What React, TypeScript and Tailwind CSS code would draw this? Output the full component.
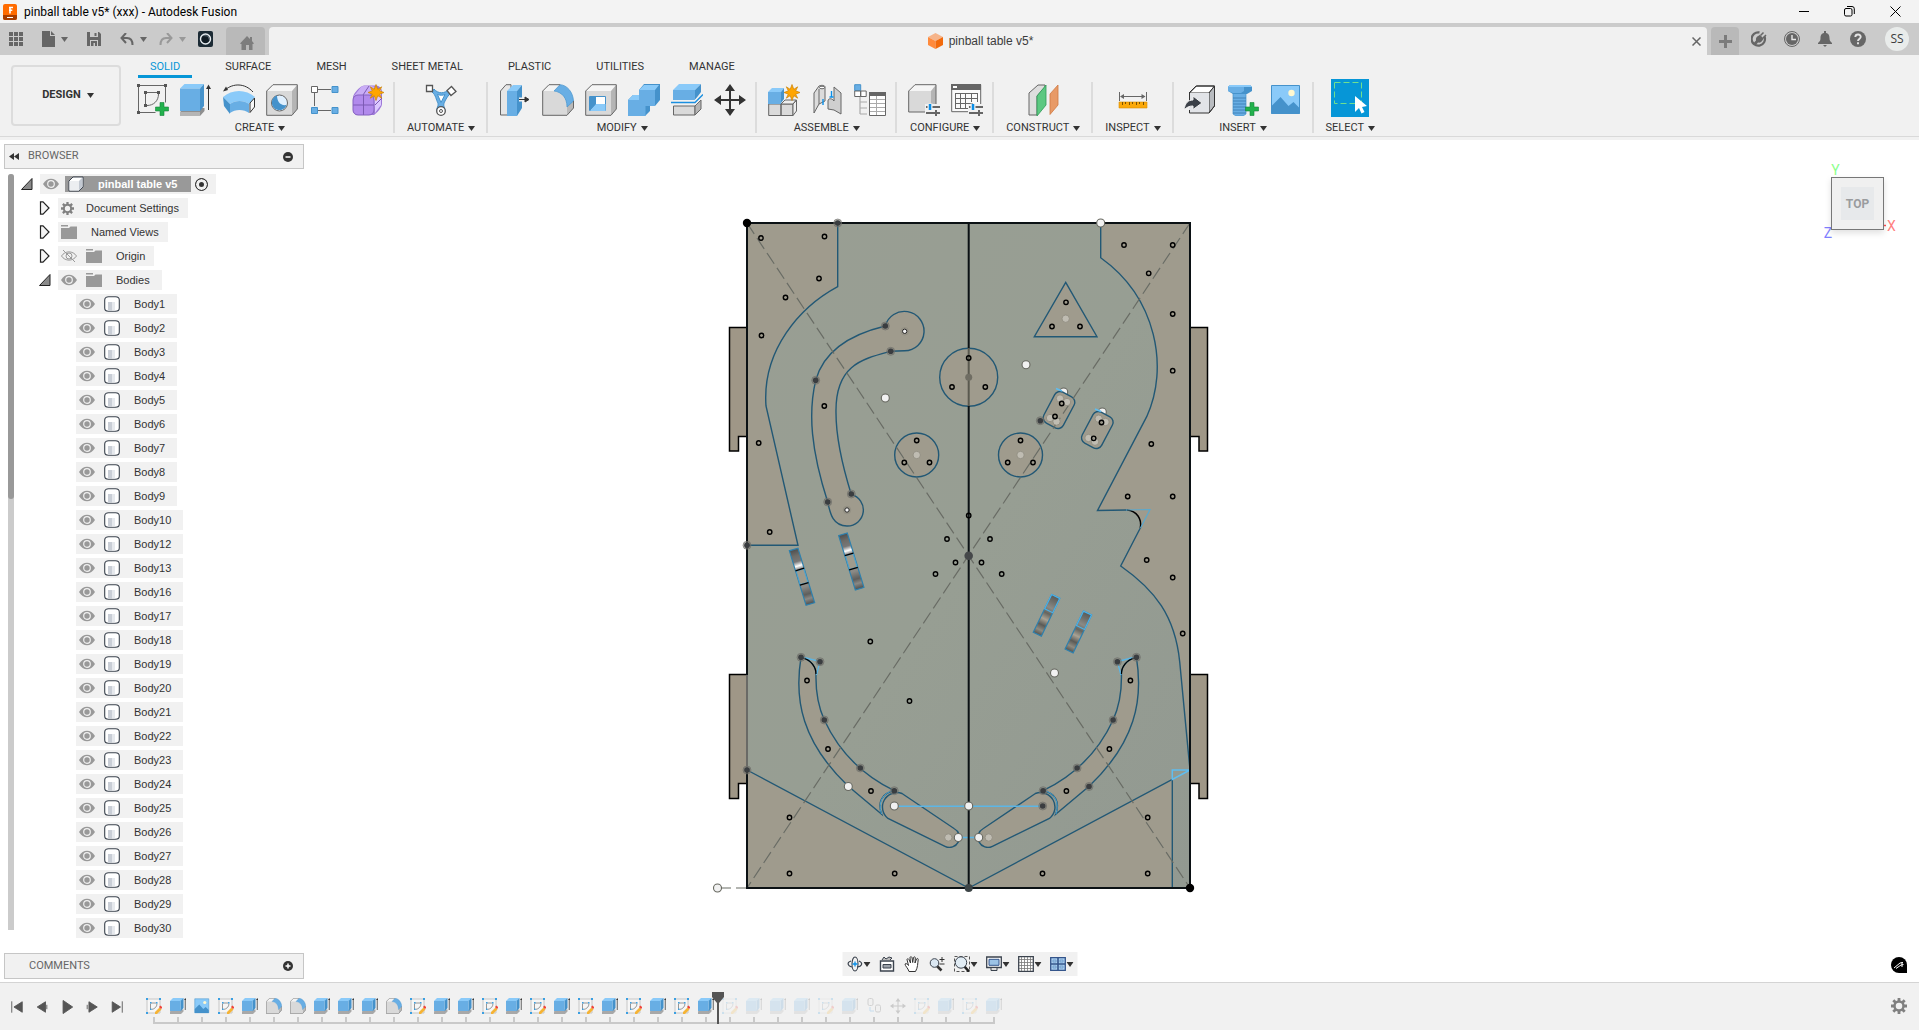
import type { ReactNode } from "react";

type Point = [number, number];

const LIGHT = "#8acaf9";
const MID = "#68aee4";
const DEEP = "#4592cb";
const INK = "#666666";

/* ---------- small shared glyphs ---------- */

function Caret({ className = "fill-[#333]" }: { className?: string }) {
  return (
    <svg width="7" height="5" viewBox="0 0 7 5" className={className} aria-hidden="true">
      <path d="M0 0h7L3.5 5z" />
    </svg>
  );
}

function Icon({ size = 32, children }: { size?: number; children: ReactNode }) {
  return (
    <svg
      width={size}
      height={size}
      viewBox="0 0 32 32"
      fill="none"
      className="shrink-0"
      aria-hidden="true"
    >
      {children}
    </svg>
  );
}

function GreenPlus() {
  return <path d="M23 18.5h4V23h4.5v4H27v4.500h-4V27h-4.500v-4H23z" fill="#22b14c" stroke="#15843a" strokeWidth="0.6" />;
}

function Spark({ x, y }: { x: number; y: number }) {
  return (
    <path
      transform={`translate(${x} ${y})`}
      d="M0-8L1.8-3.2L5.7-5.7L3.7-1.7L8 0L3.7 1.7L5.7 5.7L1.8 3.2L0 8L-1.8 3.2L-5.7 5.7L-3.7 1.7L-8 0L-3.7-1.7L-5.7-5.7L-1.8-3.2Z"
      fill="#ffa500"
      stroke="#c98208"
      strokeWidth="0.7"
    />
  );
}

function Sliders() {
  return (
    <g>
      <path d="M17 20h15v12H17z" fill="#f1f1f1" />
      <path d="M18 23h14M18 29h14" stroke={INK} strokeWidth="2" />
      <path d="M22 19.5v7" stroke="#f1f1f1" strokeWidth="5" />
      <path d="M22 20v6" stroke="#0a8fe8" strokeWidth="2.5" />
      <path d="M28 26v6" stroke={INK} strokeWidth="2" />
    </g>
  );
}

function GreyBox() {
  return (
    <g stroke={INK} strokeWidth="1" strokeLinejoin="round">
      <path d="M.7 7L7 .7h24.3L26 7z" fill="#f5f5f5" stroke="none" />
      <path d="M26 7l5.3-6.3V25L26 31.3z" fill="#b5b5b5" stroke="none" />
      <path d="M.7 7H26v24.3H.7z" fill="#d9d9d9" stroke="none" />
      <path d="M.7 7L7 .7h24.3V25L26 31.3H.7z" />
    </g>
  );
}

/* ---------- ribbon icons ---------- */

const icons: Record<string, ReactNode> = {
  sketch: (
    <>
      <path d="M1.5 1.5h27v17M1.5 1.5v27h17" stroke={INK} strokeWidth="1" />
      <path d="M0 0h3v3H0zM27 0h3v3h-3zM0 27h3v3H0zM7 7h3v3H7zM20 7h3v3h-3zM7 20h3v3H7z" fill="#555" />
      <path d="M10 8.5h10M8.5 10v10M21.5 10c0 7-5 11.5-11.5 11.5" stroke={INK} strokeWidth="1" />
      <GreenPlus />
    </>
  ),
  extrude: (
    <>
      <path d="M0 28l5-4h19.5v3L20 32H0z" fill="#8f8f8f" />
      <path d="M0 28h20v4H0z" fill="#b5b5b5" />
      <path d="M0 4.5L4.5 0H24l-4 4.5z" fill={LIGHT} />
      <path d="M20 4.5L24 0v22l-4 5z" fill={DEEP} />
      <path d="M0 4.5h20V27H0z" fill={MID} />
      <path d="M28.5 3v23" stroke="#333" strokeWidth="1" />
      <path d="M28.5.5L31 5h-5z" fill="#333" />
    </>
  ),
  revolve: (
    <>
      <path d="M2 6C10-1 22-1 30 8" stroke="#333" strokeWidth="1" />
      <path d="M0 7.5L5 6 3 2.5z" fill="#333" />
      <path d="M0 13C9 5 23 5 32 13l-6 7c-5-4-14-4-19 0z" fill={LIGHT} />
      <path d="M0 13l7 7v10l-6-8z" fill={DEEP} />
      <path d="M7 20c5-4 14-4 19 0v9c-5-4-14-4-19 0z" fill={MID} />
      <path d="M27 19l4.500-5v9L27 28.500z" fill="#f8f8f8" stroke="#333" strokeWidth="1" />
    </>
  ),
  hole: (
    <>
      <GreyBox />
      <circle cx="13.5" cy="19" r="8" fill="#dff0ff" stroke={INK} />
      <path d="M11 11.500a7.500 7.500 0 1 0 9.500 9.500C14 22 11 17 11 11.500z" fill={DEEP} />
    </>
  ),
  pattern: (
    <>
      <path d="M9 5.5h13M5.500 9v13M9 26.500h13" stroke={INK} strokeWidth="1" />
      <path d="M2.5 2.5h6v6h-6z" fill="#fff" stroke={INK} />
      <path d="M23 2.5h6v6h-6zM2.5 23.5h6v6h-6zM23 23.5h6v6h-6z" fill={MID} stroke={DEEP} />
    </>
  ),
  form: (
    <>
      <path d="M1 13c0-3 7-11 11-11.5h12C28 2 30 5 30 8v12c0 3-5 9-8 11H6c-3 0-5-2-5-5z" fill="#9d78d8" />
      <path d="M2 12l7-9c3-2 12-1 14 0l-5 8z" fill="#c9adf6" />
      <path d="M22 13l7-8v16l-6 8z" fill="#dcc8ff" />
      <rect x="1" y="11" width="21" height="20" rx="5" fill="#b18aec" />
      <path d="M11.5 11v20M1 21h21M23 21l7-7M11 11l6-9" stroke="#7d5bb5" strokeWidth="1" />
      <rect x="1" y="11" width="21" height="20" rx="5" stroke="#8562c0" />
      <Spark x={24} y={8.5} />
    </>
  ),
  automate: (
    <>
      <path d="M7 8c4 3 4 8 6 11 1 3-2 5-1 8 2 4 7 4 8 0 0-3-2-5-1-8 2-4 4-8 8-11l-3-3c-4 5-11 5-15 0z" fill={MID} stroke={DEEP} strokeWidth="1" strokeLinejoin="round" />
      <path d="M12.500 10.500l3.500 8 4-8c-2 1-5 1-7.500 0z" fill="#fff" stroke={DEEP} />
      <path d="M1.5 1.5h6v6h-6z" fill="#fff" stroke="#555" strokeWidth="1.3" />
      <path d="M26.5 2.5l4.500 5-5 4-4-5z" fill="#fff" stroke="#555" strokeWidth="1.3" />
      <circle cx="16" cy="27" r="4.3" fill="#fff" stroke="#555" strokeWidth="1.3" />
      <circle cx="16" cy="27" r="1.5" stroke="#555" />
    </>
  ),
  press: (
    <>
      <path d="M1.5 7L7 .7h5V31H1.500z" fill="#e6e6e6" stroke={INK} />
      <path d="M8 7l6-6h9l-5 6z" fill={LIGHT} />
      <path d="M8 7h10v25H8z" fill={MID} />
      <path d="M18 7l5-6v23l-5 8z" fill={DEEP} />
      <path d="M20 15.5h7" stroke="#f1f1f1" strokeWidth="4" />
      <path d="M20 15.5h7M26 13l4 2.500-4 2.500z" stroke="#333" fill="#333" />
    </>
  ),
  fillet: (
    <>
      <path d="M.7 7L7 .7h11L12 7z" fill="#f3f3f3" />
      <path d="M25 23l6.500-7v8L25 31.3z" fill="#b9b9b9" />
      <path d="M.7 7H12c8 1 13 8 13 16v8.3H.7z" fill="#d9d9d9" />
      <path d="M12 7l6-6.3C25 1 31 8 31.5 17L25 23C25 14 20 8 12 7z" fill={MID} stroke={DEEP} strokeWidth=".7" />
      <path d="M18 .7H7L.7 7v24.3H25l6.5-7.3v-7" stroke={INK} />
    </>
  ),
  shell: (
    <>
      <GreyBox />
      <path d="M4.5 12.5h16v14h-16z" fill="#fff" stroke={DEEP} />
      <path d="M5 13h6v8l-6 6z" fill={DEEP} />
      <path d="M5 27l6-7h9.500v7z" fill={LIGHT} />
    </>
  ),
  combine: (
    <>
      <path d="M0 16l5-5h6V6l5-6h16v16l-5 6h-5v5l-5 5H0z" fill={DEEP} />
      <path d="M0 16h11V6h16v16h-9.500v10H0z" fill={MID} />
      <path d="M0 16l5-5h6v5zM11 6l5-5h15l-4 5z" fill={LIGHT} />
    </>
  ),
  split: (
    <>
      <path d="M2.5 22H24v9H2.500z" fill="#dadada" stroke={INK} />
      <path d="M24 22l6-6v9l-6 6z" fill="#b5b5b5" stroke={INK} />
      <path d="M2 6l6-6h22l-6 6z" fill={LIGHT} />
      <path d="M24 6l6-6v8l-6 8z" fill={DEEP} />
      <path d="M2 6h22v10H2z" fill={MID} />
      <path d="M0 18.5h24l8-8" stroke="#f1f1f1" strokeWidth="4" />
      <path d="M0 18.5h24l8-8" stroke="#1a8fe0" strokeWidth="1.4" />
    </>
  ),
  move: (
    <path
      d="M16 0l5 7h-4v8h8v-4l7 5-7 5v-4h-8v8h4l-5 7-5-7h4v-8H7v4l-7-5 7-5v4h8V7h-4z"
      fill="#333"
    />
  ),
  component: (
    <>
      <path d="M.7 20H13v11.500H.7zM13 20h12v11.500H13z" fill="#dadada" stroke={INK} />
      <path d="M13 20l4-4h11.500L25 20zM25 20l3.500-4v11L25 31.500z" fill="#eee" stroke={INK} />
      <path d="M0 8l4-4h12l-3 4z" fill={LIGHT} />
      <path d="M13 8l3-4v11l-3 4z" fill={DEEP} />
      <path d="M0 8h13v12H0z" fill={MID} />
      <Spark x={24} y={8.5} />
    </>
  ),
  joint: (
    <>
      <path d="M3 9l5-7c2-1 6-1 6 1v14l-6 3-5 9z" fill="#dcdcdc" stroke={INK} />
      <path d="M8 5v15" stroke={INK} />
      <path d="M30 9l-7-6v14c-2-3-6-3-6 0v8l6 1 7 4z" fill="#cfcfcf" stroke={INK} />
      <ellipse cx="11" cy="3.5" rx="2.5" ry="1.3" fill="#fff" stroke={INK} />
      <path d="M12 15v6M20.5 7v6M18.5 13h4" stroke="#0a8fe8" strokeWidth="1.4" />
    </>
  ),
  tree: (
    <>
      <path d="M.7.7h6v6h-6z" fill={MID} stroke={DEEP} />
      <path d="M.7 7h6v5.500h-6zM6.7 7h5.500v5.500H6.700z" fill="#fff" stroke={INK} />
      <path d="M6 13v17M6 18h7M6 24h7M6 30h7" stroke="#aaa" strokeWidth="1.2" />
      <path d="M15.5 8.5h16v23h-16z" fill="#fff" stroke={INK} />
      <path d="M15 8h17v4H15z" fill={INK} />
      <path d="M16 15.500h15M16 19.500h15M16 23.500h15M16 27.500h15M22.500 12v19" stroke="#aaa" />
    </>
  ),
  configBox: (
    <>
      <path d="M.7 7L7 .7h21L23 7z" fill="#f5f5f5" />
      <path d="M23 7l5-6.3V22L23 27z" fill="#b5b5b5" />
      <path d="M.7 7H23v21H.7z" fill="#d9d9d9" />
      <path d="M18 28H.7V7L7 .7h21V20" stroke={INK} />
      <Sliders />
    </>
  ),
  configTable: (
    <>
      <path d="M.7.7h29v27h-29z" fill="#fafafa" stroke={INK} />
      <path d="M0 0h30v6H0z" fill={INK} />
      <path d="M2 2h4v2H2z" fill="#fff" />
      <path d="M4 9.5h23M4 14.5h23M4 19.5h18M4 24.5h14M4.5 9v16M9.5 9v16M14.5 9v16M26.5 9v9M20.5 9v9" stroke={INK} />
      <Sliders />
    </>
  ),
  plane: (
    <>
      <path d="M2 9l9-8h7v2l-8 9v19H2z" fill="#dedede" stroke={INK} />
      <path d="M10 12l9-11v20l-9 11z" fill="#5cc881" stroke="#2f9a57" strokeWidth=".8" />
      <path d="M23 10l8-9v20l-8 9.500z" fill="#e89a66" stroke="#cf7a42" strokeWidth=".8" />
    </>
  ),
  measure: (
    <>
      <path d="M2.500 8v9M29.500 8v9M4 12.5h24" stroke={INK} strokeWidth="1" />
      <path d="M3 12.5l4-2.500v5zM28.500 12.500l-4-2.500v5z" fill={INK} />
      <path d="M2 18h28v6H2z" fill="#fba90a" stroke="#d98e00" strokeWidth=".6" />
      <path d="M5.500 18v3M8.500 18v2M12.500 18v3M15.500 18v2M19.500 18v3M22.500 18v2M26.500 18v3" stroke="#7a5200" />
    </>
  ),
  insertBox: (
    <>
      <path d="M5 9l7-7h18.500L25 9z" fill="#fff" stroke="#333" />
      <path d="M25 9l5.500-7v20L25 29z" fill="#b9bcc0" stroke="#333" />
      <path d="M5 9h20v20H5z" fill="#e2e4e8" />
      <path d="M5.500 17V9l7-7h18v20L25 29H5.500v-3" stroke="#333" strokeLinejoin="round" />
      <path d="M0 26c1-7 4-10 9-10v-4l9 7-9 6.500V22c-4 0-6 1-9 4z" fill="#3b4048" stroke="#f1f1f1" />
    </>
  ),
  bolt: (
    <>
      <path d="M6 9h13v21l-3 2H9l-3-2z" fill={MID} stroke={DEEP} strokeWidth=".7" />
      <path d="M6 14h13M6 17h13M6 20h13M6 23h13M6 26h13M6 29h13" stroke="#3c7fb6" strokeWidth=".9" />
      <path d="M1 3l2-2h20l2 2v4l-5 3H6L1 7z" fill={DEEP} />
      <path d="M1 2h16v5l-3 2H6L1 7z" fill={MID} />
      <path d="M1 3l2-2h20l2 2z" fill={LIGHT} />
      <GreenPlus />
    </>
  ),
  picture: (
    <>
      <path d="M1.5 1.5h28v28h-28z" fill={LIGHT} />
      <path d="M1.5 22l9-9 8 9 5-4 6 6v6h-28z" fill={DEEP} />
      <circle cx="21.5" cy="9" r="3.2" fill="#fff8d0" />
      <path d="M1.5 1.5h28v28h-28z" stroke={DEEP} />
    </>
  ),
};

function CaretLabel({ text }: { text: string }) {
  return (
    <button type="button" className="flex items-center gap-1 whitespace-nowrap px-[7px] leading-4">
      {text}
      <Caret />
    </button>
  );
}

const groups = [
  { label: "CREATE", icons: ["sketch", "extrude", "revolve", "hole", "pattern", "form"] },
  { label: "AUTOMATE", icons: ["automate"] },
  { label: "MODIFY", icons: ["press", "fillet", "shell", "combine", "split", "move"] },
  { label: "ASSEMBLE", icons: ["component", "joint", "tree"] },
  { label: "CONFIGURE", icons: ["configBox", "configTable"] },
  { label: "CONSTRUCT", icons: ["plane"] },
  { label: "INSPECT", icons: ["measure"] },
  { label: "INSERT", icons: ["insertBox", "bolt", "picture"] },
];

const ribbonTabs = ["SOLID", "SURFACE", "MESH", "SHEET METAL", "PLASTIC", "UTILITIES", "MANAGE"];

/* ---------- header ---------- */

function TitleBar() {
  return (
    <div className="flex h-[23px] items-center bg-[#f3f3f3] pl-[3px] font-[Roboto,sans-serif] text-xs text-black">
      <svg width="14" height="16" viewBox="0 0 14 16" aria-hidden="true">
        <rect width="14" height="16" rx="2" fill="#ff6b00" />
        <path d="M0 11h14v3a2 2 0 0 1-2 2H2a2 2 0 0 1-2-2z" fill="#a63c00" />
        <path d="M7 3v6.500M6 3.500h4M6 6.300h3.300" stroke="#fff" strokeWidth="1.6" />
        <path d="M4 13.5h6" stroke="#fff" strokeWidth="1" />
      </svg>
      <h1 className="pl-[7px]">pinball table v5* (xxx) - Autodesk Fusion</h1>
      <div className="ml-auto flex h-full items-center pr-px">
        <button type="button" aria-label="Minimize" className="grid w-[46px] place-items-center">
          <svg width="11" height="11" viewBox="0 0 11 11"><path d="M0 5.5h10" stroke="#000" /></svg>
        </button>
        <button type="button" aria-label="Restore" className="grid w-[45px] place-items-center">
          <svg width="11" height="11" viewBox="0 0 11 11" fill="none" stroke="#000">
            <rect x=".5" y="2.5" width="7.5" height="7.5" rx="1.5" />
            <path d="M3 .5h5a2.300 2.300 0 0 1 2.300 2.300V8" />
          </svg>
        </button>
        <button type="button" aria-label="Close" className="grid w-[46px] place-items-center">
          <svg width="11" height="11" viewBox="0 0 11 11"><path d="M.5.5l10 10M10.500.5l-10 10" stroke="#000" /></svg>
        </button>
      </div>
    </div>
  );
}

function TabStrip() {
  return (
    <div className="flex h-8 items-stretch bg-[#cbcbcb] pt-1 font-['Liberation_Sans',Arial,sans-serif] text-xs text-[#3c3c3c]">
      <div className="flex items-center gap-[19px] pb-1 pl-[9px] pr-[13px]">
        <button type="button" aria-label="Data panel">
          <svg width="14" height="14" viewBox="0 0 14 14" fill="#666">
            <path d="M0 0h4v4H0zM5 0h4v4H5zM10 0h4v4h-4zM0 5h4v4H0zM5 5h4v4H5zM10 5h4v4h-4zM0 10h4v4H0zM5 10h4v4H5zM10 10h4v4h-4z" />
          </svg>
        </button>
        <button type="button" aria-label="File" className="flex items-center gap-1.5">
          <svg width="13" height="16" viewBox="0 0 13 16" fill="#666"><path d="M0 0h8v5h5v11H0zM9 0l4 4H9z" /></svg>
          <Caret className="fill-[#666]" />
        </button>
        <button type="button" aria-label="Save">
          <svg width="14" height="14" viewBox="0 0 14 14">
            <path d="M0 0h12l2 2v12H0z" fill="#666" />
            <path d="M3 0h8v5H3zM3 8h8v6H3z" fill="#cbcbcb" />
            <path d="M7.500 1h2v3h-2zM4 9h6v5H4z" fill="#666" />
            <path d="M6.500 11H8v3H6.500z" fill="#cbcbcb" />
          </svg>
        </button>
        <div className="flex items-center gap-3">
          <button type="button" aria-label="Undo" className="flex items-center gap-1.5">
            <svg width="14" height="13" viewBox="0 0 14 13" fill="none" stroke="#666" strokeWidth="2">
              <path d="M6 0L1.500 5L6 10M2 5h5c4 0 5.500 2.500 5.500 7" />
            </svg>
            <Caret className="fill-[#666]" />
          </button>
          <button type="button" aria-label="Redo" className="flex items-center gap-1.5">
            <svg width="14" height="13" viewBox="0 0 14 13" fill="none" stroke="#999" strokeWidth="2">
              <path d="M8 0l4.500 5L8 10M12 5H7c-4 0-5.500 2.500-5.500 7" />
            </svg>
            <Caret className="fill-[#999]" />
          </button>
          <button type="button" aria-label="Extensions">
            <svg width="15" height="16" viewBox="0 0 15 16">
              <rect width="15" height="16" rx="2" fill="#1c2b35" />
              <circle cx="7.5" cy="8" r="5" fill="#111c24" stroke="#e8eef2" strokeWidth="1.4" />
              <path d="M5 4.500l5 .5 1.500 4" stroke="#8fa0ab" strokeWidth=".6" fill="none" />
            </svg>
          </button>
        </div>
      </div>
      <button type="button" aria-label="Home" className="mr-1 grid w-[39px] place-items-center rounded-t bg-[#b9b9b9] pl-[3px] pt-[3px]">
        <svg width="14" height="14" viewBox="0 0 14 14" fill="#7d7d7d">
          <path d="M7 0l3 3V1h2v4l2 2.500-1 .5h-.5v6H9V9H6v5H1.500V8H1L0 7.500z" />
        </svg>
      </button>
      <div className="flex flex-1 items-center rounded-t bg-[#f1f1f1] pr-[6px]">
        <div className="flex flex-1 items-center justify-center gap-[6px]">
          <svg width="15" height="16" viewBox="0 0 15 16" aria-hidden="true">
            <path d="M7.500 0L15 4 7.500 8 0 4z" fill="#f6b48a" />
            <path d="M0 4l7.500 4v8L0 12z" fill="#ff8a3c" />
            <path d="M15 4L7.500 8v8l7.500-4z" fill="#f26a0c" />
          </svg>
          <span>pinball table v5*</span>
        </div>
        <button type="button" aria-label="Close tab">
          <svg width="9" height="9" viewBox="0 0 9 9"><path d="M.5.5l8 8M8.500.5l-8 8" stroke="#666" strokeWidth="1.5" /></svg>
        </button>
      </div>
      <button type="button" aria-label="New tab" className="ml-1 grid w-7 place-items-center rounded-t bg-[#b9b9b9]">
        <svg width="13" height="13" viewBox="0 0 13 13"><path d="M6.500 0v13M0 6.500h13" stroke="#7b7b7b" strokeWidth="3" /></svg>
      </button>
      <div className="flex items-center gap-[17px] pb-1 pl-3 pr-[10px]">
        <button type="button" aria-label="Online status">
          <svg width="16" height="16" viewBox="0 0 16 16" fill="none">
            <path d="M13.500 5.500A6.700 6.700 0 1 1 8.500 1.400" stroke="#666" strokeWidth="2.200" />
            <path d="M2.500 12.500c1-1.500 1.500-2 2.500-3-.5-2.500 1-4.500 3-5l.8-.8 4 4-.8.8c-1 2.500-3 3.500-5 3l-2.500 3z" fill="#666" />
            <path d="M9.500 4.500l3-3M12 7l3-3" stroke="#666" strokeWidth="1.500" />
          </svg>
        </button>
        <button type="button" aria-label="Job status">
          <svg width="16" height="16" viewBox="0 0 16 16" fill="none">
            <circle cx="8" cy="8" r="7.5" stroke="#666" />
            <circle cx="8" cy="8" r="6" fill="#666" />
            <path d="M8 4v4.500h4" stroke="#e8e8e8" strokeWidth="1.4" />
          </svg>
        </button>
        <button type="button" aria-label="Notifications">
          <svg width="16" height="16" viewBox="0 0 16 16" fill="#666">
            <path d="M7 0h2v2c3 .5 3.500 3 3.500 5s.5 3.500 2.500 5v1H1v-1c2-1.500 2.500-3 2.500-5S4 2.500 7 2zM6 14h4l-2 2z" />
          </svg>
        </button>
        <button type="button" aria-label="Help">
          <svg width="16" height="16" viewBox="0 0 16 16" fill="none">
            <circle cx="8" cy="8" r="8" fill="#666" />
            <path d="M5.300 6C5.500 2.500 11 3 10.700 6c-.2 2-2.700 2-2.700 4M8 11.300v1.900" stroke="#e4e4e4" strokeWidth="1.9" />
          </svg>
        </button>
        <button type="button" className="ml-[2px] size-6 rounded-full bg-[#e9eceb] font-['Open_Sans',sans-serif] text-xs leading-6 text-[#3c3c3c]">
          SS
        </button>
      </div>
    </div>
  );
}

function Ribbon() {
  return (
    <div className="bg-[#f1f1f1] pb-[3px] font-[Roboto,sans-serif] text-[11px] text-[#333]">
      <div className="flex h-[82px] border-b border-[#d9d9d9]">
        <button
          type="button"
          className="my-[10px] ml-[11px] mr-[5px] flex w-[110px] items-center justify-center gap-[6px] rounded border-2 border-[#dcdcdc] pl-1 font-bold"
        >
          DESIGN
          <Caret />
        </button>
        <div className="min-w-0 flex-1">
          <nav className="flex h-6 gap-[21px] pl-3">
            {ribbonTabs.map((tab) => (
              <a
                key={tab}
                href="#"
                className={
                  tab === "SOLID"
                    ? "h-[23px] whitespace-nowrap border-b-[3px] border-[#0696d7] px-3 leading-[23px] text-[#0696d7]"
                    : "h-[23px] whitespace-nowrap px-3 leading-[23px]"
                }
              >
                {tab}
              </a>
            ))}
          </nav>
          <div className="flex">
            {groups.map((group) => (
              <div key={group.label} className="relative flex flex-col items-center pl-[5px] pr-[6px]">
                <div className="flex h-[41px]">
                  {group.icons.map((name) => (
                    <button key={name} type="button" aria-label={name} className="grid w-[43px] place-items-center">
                      <Icon>{icons[name]}</Icon>
                    </button>
                  ))}
                </div>
                <CaretLabel text={group.label} />
                <div className="absolute right-0 top-[3px] h-[51px] w-[2px] bg-[#dcdcdc]" />
              </div>
            ))}
            <div className="flex flex-col items-center pl-[5px]">
              <div className="h-[41px]">
                <button type="button" aria-label="select" className="grid size-[38px] place-items-center bg-[#0696d7]">
                  <svg width="38" height="38" viewBox="0 0 38 38" fill="none">
                    <path d="M3.500 3.500h27v21h-27z" stroke="#6fe08f" strokeDasharray="6 3" />
                    <path d="M24 17v16l4-4 2.500 5.500 3-1.500-2.500-5 5-1z" fill="#fff" />
                  </svg>
                </button>
              </div>
              <CaretLabel text="SELECT" />
            </div>
          </div>
        </div>
      </div>
    </div>
  );
}

/* ---------- browser panel ---------- */

function Eye({ hidden = false }: { hidden?: boolean }) {
  return (
    <svg width="16" height="12" viewBox="0 0 16 12" fill="none" className="shrink-0" aria-hidden="true">
      {hidden ? (
        <>
          <path d="M.5 6C4 .5 12 .5 15.500 6 12 11.500 4 11.500.5 6z" stroke="#999" />
          <circle cx="8" cy="6" r="3" stroke="#999" />
          <path d="M2 0l12 12" stroke="#999" />
        </>
      ) : (
        <>
          <path d="M0 6C4-1 12-1 16 6 12 13 4 13 0 6z" fill="#999" />
          <circle cx="8" cy="6" r="3.3" stroke="#f1f1f1" strokeWidth="1.2" />
        </>
      )}
    </svg>
  );
}

function Folder() {
  return (
    <svg width="16" height="14" viewBox="0 0 16 14" className="shrink-0" aria-hidden="true">
      <path d="M0 0h7v1.500H0zM0 3h8l1.500-1.500H16V14H0z" fill="#999" />
    </svg>
  );
}

function Gear({ size }: { size: number }) {
  return (
    <svg width={size} height={size} viewBox="0 0 16 16" fill="none" className="shrink-0" aria-hidden="true">
      <path
        d="M8 0v16M0 8h16M2.300 2.300l11.400 11.400M13.700 2.300L2.300 13.700"
        stroke="#808080"
        strokeWidth="2.800"
      />
      <circle cx="8" cy="8" r="4.5" fill="#f1f1f1" stroke="#808080" strokeWidth="2.500" />
    </svg>
  );
}

function BodyIcon() {
  return (
    <svg width="16" height="16" viewBox="0 0 16 16" className="shrink-0" aria-hidden="true">
      <path d="M.7 4C.7 1.500 3 .7 4.500.7h7c1.500 0 3.800.8 3.800 3.300v8c0 2.500-2.300 3.300-3.800 3.300h-7C3 15.300.7 14.500.7 12z" fill="#fff" stroke="#3b434e" strokeWidth="1.1" />
      <path d="M4 6h4v8.500H4.500L4 14z" fill="#c9ced6" />
      <path d="M8 6h3v8.500H8z" fill="#e6e9ed" />
    </svg>
  );
}

function Arrow({ open = false }: { open?: boolean }) {
  return (
    <svg width="12" height="14" viewBox="0 0 12 14" className="shrink-0" aria-hidden="true">
      {open ? (
        <path d="M.5 12.500L11 1.500v11z" fill="#8a8a8a" stroke="#222" />
      ) : (
        <path d="M1.500.8h2.500L10 7l-6 6.200H1.500z" fill="#f4f4f4" stroke="#222" strokeWidth="1.2" />
      )}
    </svg>
  );
}

const bodies = [1, 2, 3, 4, 5, 6, 7, 8, 9, 10, 12, 13, 16, 17, 18, 19, 20, 21, 22, 23, 24, 25, 26, 27, 28, 29, 30];

function Browser() {
  return (
    <section className="flex min-h-0 flex-1 flex-col">
      <div className="flex h-[25px] shrink-0 items-center border border-[#c6c6c6] bg-[#f1f1f1] pl-1 pr-[10px] font-[Roboto,sans-serif] text-[11px] text-[#666]">
        <button type="button" aria-label="Collapse">
          <svg width="10" height="7" viewBox="0 0 10 7"><path d="M5 0v7L0 3.500zM10 0v7L5 3.500z" fill="#333" /></svg>
        </button>
        <h2 className="pl-[9px]">BROWSER</h2>
        <button type="button" aria-label="Hide browser" className="ml-auto">
          <svg width="10" height="10" viewBox="0 0 10 10"><circle cx="5" cy="5" r="5" fill="#333" /><path d="M2.500 5h5" stroke="#fff" strokeWidth="1.5" /></svg>
        </button>
      </div>
      <div className="mt-[3px] flex min-h-0 overflow-hidden">
        <div className="mb-[10px] ml-1 mt-[2px] w-[6px] shrink-0 rounded-t bg-[#cbcbcb]">
          <div className="h-[43%] rounded-full bg-[#999]" />
        </div>
        <ul className="font-['Liberation_Sans',Arial,sans-serif] text-[11px] leading-5 text-[#333]">
          <li className="flex h-6 items-center gap-[7px] pl-[7px]">
            <Arrow open />
            <div className="flex h-5 items-center bg-[#f1f1f1] pl-[3px] pr-2">
              <Eye />
              <div className="ml-[6px] mr-1 flex h-4 items-center gap-[14px] bg-[#999] pl-[3px] pr-[14px] font-bold text-white">
                <svg width="16" height="16" viewBox="0 0 16 16" aria-hidden="true">
                  <path d="M1 5l4-4h10v10l-4 4H1z" fill="#fff" stroke="#3b434e" strokeLinejoin="round" />
                  <path d="M11 5l3.500-3.500v9.300L11 14.500z" fill="#c3c9d2" />
                  <path d="M1.500 5H11v9.500H1.500z" fill="#eceef1" />
                </svg>
                pinball table v5
              </div>
              <input
                type="radio"
                defaultChecked
                aria-label="Activate component"
                className="size-[13px] appearance-none rounded-full border border-[#333] bg-[#333] shadow-[inset_0_0_0_3px_#f1f1f1]"
              />
            </div>
          </li>
          <li className="flex h-6 items-center gap-[7px] pl-[25px]">
            <Arrow />
            <div className="flex h-5 items-center gap-3 bg-[#f1f1f1] pl-[3px] pr-[9px]">
              <Gear size={13} />
              Document Settings
            </div>
          </li>
          <li className="flex h-6 items-center gap-[7px] pl-[25px]">
            <Arrow />
            <div className="flex h-5 items-center gap-[14px] bg-[#f1f1f1] pl-[3px] pr-[9px]">
              <Folder />
              Named Views
            </div>
          </li>
          <li className="flex h-6 items-center gap-[7px] pl-[25px]">
            <Arrow />
            <div className="flex h-5 items-center gap-[9px] bg-[#f1f1f1] pl-[3px] pr-[9px]">
              <Eye hidden />
              <Folder />
              <span className="pl-[5px]">Origin</span>
            </div>
          </li>
          <li>
            <div className="flex h-6 items-center gap-[7px] pl-[25px]">
              <Arrow open />
              <div className="flex h-5 items-center gap-[9px] bg-[#f1f1f1] pl-[3px] pr-3">
                <Eye />
                <Folder />
                <span className="pl-[5px]">Bodies</span>
              </div>
            </div>
            <ul>
              {bodies.map((n) => (
                <li key={n} className="flex h-6 items-center pl-[62px]">
                  <div className="flex h-5 items-center gap-[9px] bg-[#f1f1f1] pl-[3px] pr-3">
                    <Eye />
                    <BodyIcon />
                    <span className="pl-[5px]">Body{n}</span>
                  </div>
                </li>
              ))}
            </ul>
          </li>
        </ul>
      </div>
    </section>
  );
}

/* ---------- playfield drawing ---------- */

const holes: Point[] = [
  [761, 238], [824.5, 236.5], [819, 278.5], [785.5, 297.5], [761.5, 335.5], [758.7, 443], [769.7, 532],
  [824.3, 406], [968.7, 358], [952, 387], [985.3, 387], [916.7, 440.5], [904.3, 462.5], [929.5, 462.5],
  [968.7, 515.5], [947, 539], [990, 539], [1124, 245], [1172.7, 245], [1148.7, 273.3], [1172.7, 314],
  [1172.7, 370.7], [1066, 302.3], [1052, 326.5], [1080, 326.5], [1151.3, 444], [1020.5, 440.5],
  [1007.7, 462.5], [1033, 462.5], [1127.7, 496.5], [1172.7, 496.5], [1061.7, 403.5], [1055, 416.5],
  [1101.5, 422.5], [1093.7, 438.3], [955.5, 562.5], [981.5, 562.5], [935.5, 574], [1001.7, 574],
  [870.3, 641.5], [909.5, 701], [1146.7, 560], [1172.7, 577.5], [1182.7, 633.5], [789.5, 817.5],
  [789.5, 873.5], [894.7, 873.5], [1042.5, 873.5], [1147.7, 873.5], [1147.7, 817.5],
];

const darkDots: Point[] = [
  [837.7, 223], [885.3, 326], [890.7, 351.3], [815.7, 380.3], [827.7, 502], [851.3, 494], [747, 545.3],
  [747, 770], [1040.3, 420.7], [1042.7, 806], [1089, 786.5],
];

const whiteDots: Point[] = [
  [885.3, 398], [1026, 364.7], [1100.7, 223], [1054.5, 673], [894.3, 806], [968.7, 806], [848.3, 786.5],
  [958.3, 837.5], [978.7, 837.5], [717.5, 888],
];

// sit behind the two pill shaped bumpers
const tuckedDots: Point[] = [[1063.7, 392], [1102.3, 412]];

const fadedDots: Point[] = [
  [916.7, 455], [1020.5, 455], [1065.7, 318.7], [1060, 398.5], [1067, 402], [1050, 418], [1056.5, 421.5],
  [1098.7, 418.7], [1105.5, 422], [1088.5, 438], [1095, 441.7], [948.3, 837.5], [988.7, 837.5],
];

const BROWN = "#9f9b8d";
const EDGE = "#225875";

function DarkDot({ x, y }: { x: number; y: number }) {
  return (
    <g>
      <circle cx={x} cy={y} r="4" fill="#77786f" fillOpacity=".5" stroke="#6c6c68" strokeWidth=".6" />
      <circle cx={x} cy={y} r="2.8" fill="#3a3d40" />
    </g>
  );
}

function WhiteDot({ x, y }: { x: number; y: number }) {
  return <circle cx={x} cy={y} r="4" fill="#f1f1f1" stroke="#66675f" strokeWidth="1.1" />;
}

// Inlane guide and flipper; drawn once per side
function FlipperSide() {
  return (
    <g>
      <g fill={BROWN} stroke={EDGE} strokeWidth="1.4">
        <path d="M801 657.3C794 700 802 742 848.3 786.3L881.7 814.3C877 802 882 793 894.3 790.7C866 777 840 754 824.3 720C817 704 815.5 690 816 673C815.5 665 808 658.5 801 657.3Z" />
        <path d="M902 793.5L954 828.5A9.3 9.3 0 0 1 945 846.3L888 818.5A14.5 14.5 0 0 1 902 793.5Z" />
      </g>
      <path d="M881.5 814C877.5 802 883 793 893 790.5" fill="none" stroke="#4ba3d0" strokeWidth="1" />
      <path d="M802 657L820 661.5L816.5 675" fill="none" stroke="#5cb6e6" strokeWidth="1.3" />
      <path d="M803 658C811 660 816 667 816 674" fill="none" stroke="#000" strokeWidth="1.2" />
      {[[801, 657.3], [820, 661.7], [824.3, 720], [860.3, 768], [894.3, 790.7]].map(([x, y]) => (
        <DarkDot key={x} x={x} y={y} />
      ))}
      {[[807, 680.5], [828, 749], [871, 791]].map(([x, y]) => (
        <circle key={x} cx={x} cy={y} r="2.2" fill="none" stroke="#000" strokeWidth="1.4" />
      ))}
    </g>
  );
}

function Slot({ x, y, angle, length }: { x: number; y: number; angle: number; length: number }) {
  const half = length / 2;
  const long = length > 50;
  return (
    <g transform={`translate(${x} ${y}) rotate(${angle})`}>
      <rect x="-4.5" y={-half} width="9" height={length} fill={long ? "url(#slotLong)" : "url(#slotShort)"} stroke="#2f80ad" strokeWidth="1.2" />
      {long ? (
        <>
          <path d="M-4-7H4V7H-4Z" fill={BROWN} stroke="#4ba3d0" />
          <path d="M-4.500-7.500h9M-4.500 7.500h9" stroke="#000" strokeWidth="1.3" />
        </>
      ) : (
        <path d={`M-4.5-5v${5 - half}h9v${half - 5}z`} fill="none" stroke="#4fb0e4" strokeWidth="1.2" />
      )}
    </g>
  );
}

function Playfield() {
  return (
    <svg viewBox="0 140 1919 842" className="absolute inset-0 size-full" role="img" aria-label="pinball table model, top view">
      <defs>
        <linearGradient id="felt" x1="0" y1="0" x2="1" y2="1">
          <stop offset="0" stopColor="#999e93" />
          <stop offset=".5" stopColor="#979e93" />
          <stop offset="1" stopColor="#929991" />
        </linearGradient>
        <linearGradient id="slotLong" x1="0" y1="0" x2="0" y2="1">
          <stop offset="0" stopColor="#4e4e4e" />
          <stop offset=".12" stopColor="#6e6d69" />
          <stop offset=".22" stopColor="#777" />
          <stop offset=".3" stopColor="#fff" />
          <stop offset=".36" stopColor="#888" />
          <stop offset=".68" stopColor="#8b8a85" />
          <stop offset=".82" stopColor="#5e5e5c" />
          <stop offset=".9" stopColor="#8a8985" />
          <stop offset="1" stopColor="#4e4e4e" />
        </linearGradient>
        <linearGradient id="slotShort" x1="0" y1="0" x2="0" y2="1">
          <stop offset="0" stopColor="#5a5a58" />
          <stop offset=".15" stopColor="#6f706c" />
          <stop offset=".3" stopColor="#8b8a85" />
          <stop offset=".45" stopColor="#66655f" />
          <stop offset=".6" stopColor="#a8a294" />
          <stop offset=".75" stopColor="#5b5a56" />
          <stop offset=".88" stopColor="#8f8b80" />
          <stop offset="1" stopColor="#54534f" />
        </linearGradient>
      </defs>

      {/* legs */}
      <g fill="#9f9787" stroke="#000" strokeWidth="1.5">
        <path d="M747 327.500H729.500V451H738.500V436.500H747ZM747 674.500H729.500V798.500H738.500V783.500H747Z" />
        <path d="M1190 327.500H1207.500V451H1199V436.500H1190ZM1190 674.500H1207.500V798.500H1199V783.500H1190Z" />
      </g>

      <path d="M747 223H1190V888H747Z" fill="url(#felt)" />

      <g fill={BROWN}>
        <path d="M747 223H837.700V286.700C800 307 762 350 766 406L798 545.300H747Z" />
        <path d="M1100.700 223V257.700C1157 298 1169 368 1146.700 416.700L1097.500 510.500L1127 510C1137 511 1142 519 1140.300 528L1120.700 566C1155 590 1175 616 1179.700 661.700L1190 770V223Z" />
        <path d="M747 770L968.700 888H747ZM968.700 888L1172.300 779.500V888Z" />
      </g>
      <g fill="none" stroke={EDGE} strokeWidth="1.4">
        <path d="M837.700 223V286.700C800 307 762 350 766 406L798 545.300H747" />
        <path d="M1100.700 223V257.700C1157 298 1169 368 1146.700 416.700L1097.500 510.500L1127 510M1140.300 528L1120.700 566C1155 590 1175 616 1179.700 661.700L1190 770" />
        <path d="M747 770L968.700 888L1172.300 779.500V888" />
      </g>
      <path d="M1127 510C1137 511 1142 519 1140.300 528" fill="none" stroke="#000" strokeWidth="1.5" />
      <path d="M1126 510L1150 509.500L1140.500 528" fill="none" stroke="#5aa9cf" strokeWidth="1.2" />
      <path d="M1172.300 770H1190L1172.300 779.500Z" fill="none" stroke="#5fbdf0" strokeWidth="1.5" />

      {tuckedDots.map(([x, y]) => (
        <WhiteDot key={x} x={x} y={y} />
      ))}
      <g fill={BROWN} stroke={EDGE} strokeWidth="1.4">
        <path d="M885.300 326C852 334 824 350 815.700 380.300C808 413 811 450 827.700 502C830 512 832 526 847 526A16 16 0 0 0 851.300 494.500C840 458 836 430 836 413C835 365 862 359 890.700 351.300L904.700 350.800A19.700 19.700 0 1 0 885.300 326Z" />
        <circle cx="968.7" cy="377.3" r="29" />
        <circle cx="916.7" cy="455" r="22" />
        <circle cx="1020.5" cy="455" r="22" />
        <path d="M1065.700 282.300L1097 336.700H1034.300Z" />
        <rect x="-11" y="-17.5" width="22" height="35" rx="6" transform="translate(1059 410) rotate(28)" />
        <rect x="-11" y="-17.5" width="22" height="35" rx="6" transform="translate(1097.3 430) rotate(28)" />
      </g>

      <Slot x={802} y={576.7} angle={-17} length={57} />
      <Slot x={851.3} y={561.5} angle={-17} length={57} />
      <Slot x={1046.5} y={615.3} angle={26} length={42} />
      <Slot x={1078.3} y={632} angle={26} length={42} />

      <FlipperSide />
      <g transform="translate(1937.4 0) scale(-1 1)">
        <FlipperSide />
      </g>
      <path d="M894 806.300H1043M958 837.500H979" stroke="#5cb6e6" strokeWidth="1.6" />

      <g stroke="#696c65" strokeWidth="1.2" strokeDasharray="13 5">
        <path d="M747 223L1190 888M1190 223L747 888M718 888H747" />
      </g>

      <g fill="none" stroke="#0b1114" strokeWidth="2">
        <path d="M747 223H1190V888H747Z" />
        <path d="M968.700 223V348M968.700 406V888" />
        <path d="M968.700 348V406" stroke="#5a594f" />
      </g>
      <path d="M747 675V770" stroke="#6a6a66" strokeWidth="2" />

      {fadedDots.map(([x, y]) => (
        <circle key={`${x}-${y}`} cx={x} cy={y} r="3.7" fill="#bfbcb2" stroke="#918d81" strokeWidth=".9" />
      ))}
      {holes.map(([x, y]) => (
        <circle key={`${x}-${y}`} cx={x} cy={y} r="2.2" fill="none" stroke="#000" strokeWidth="1.4" />
      ))}
      {darkDots.map(([x, y]) => (
        <DarkDot key={`${x}-${y}`} x={x} y={y} />
      ))}
      {whiteDots.map(([x, y]) => (
        <WhiteDot key={`${x}-${y}`} x={x} y={y} />
      ))}
      {[[904.7, 331.3], [847, 510]].map(([x, y]) => (
        <g key={x}>
          <circle cx={x} cy={y} r="3.8" fill="none" stroke="#8d8a7e" strokeWidth=".7" />
          <circle cx={x} cy={y} r="2.2" fill="#f3f3f3" stroke="#222" strokeWidth="1" />
        </g>
      ))}
      <circle cx="968.7" cy="377.3" r="3.5" fill="#6f6d63" />
      <circle cx="968.7" cy="555.7" r="4.3" fill="#45484a" />
      <circle cx="968.7" cy="888" r="4" fill="#3c4446" />
      <circle cx="747" cy="223" r="4.2" />
      <circle cx="1190" cy="888" r="4.2" />
      <path d="M1056 388.500l6 2.500M1095 409l6 2.500" stroke="#5fbdf0" strokeWidth="1.6" />
    </svg>
  );
}

function ViewCube() {
  return (
    <svg
      width="84"
      height="88"
      viewBox="0 0 84 88"
      className="absolute right-4 top-[18px] font-[Roboto,sans-serif]"
      role="img"
      aria-label="View cube"
    >
      <text x="16.5" y="17" fontSize="14" textAnchor="middle" fill="#8dff8d">Y</text>
      <text x="9" y="80" fontSize="14" textAnchor="middle" fill="#7f7fff">Z</text>
      <text x="72.5" y="73" fontSize="14" textAnchor="middle" fill="#ff8080">X</text>
      <path d="M64 67.500h3" stroke="#ff5050" strokeWidth="1.5" />
      <g className="drop-shadow-md">
        <rect x="12.5" y="19.5" width="52" height="52" fill="#f0f0f0" stroke="#777" />
      </g>
      <rect x="22" y="29" width="33" height="33" fill="#e7e9eb" />
      <text x="38.5" y="50" fontSize="12" fontWeight="700" textAnchor="middle" fill="#9a9c9e">TOP</text>
    </svg>
  );
}

/* ---------- navigation bar ---------- */

const navTools = [
  {
    name: "Orbit",
    caret: true,
    art: (
      <>
        <ellipse cx="8" cy="8" rx="3" ry="7" stroke="#3b434e" strokeWidth="1.1" />
        <path d="M4 5C-.5 6.500.5 10 5 11M12 5c4.500 2 3 5.500-2 6" stroke="#3b434e" strokeWidth="1.1" />
        <path d="M8 5.500v5M5.500 8h5" stroke="#0a8fe8" strokeWidth="1.3" />
      </>
    ),
  },
  {
    name: "Look at",
    caret: false,
    art: (
      <>
        <path d="M1.500 5h13v10h-13z" fill="#fff" stroke="#3b434e" strokeWidth="1.4" />
        <path d="M4 8.500h8V12H4z" fill="#9aa0a8" stroke="#3b434e" />
        <path d="M3 4l2-3 2 2 3-2 3 1-2 2" fill="#bbb" stroke="#3b434e" />
      </>
    ),
  },
  {
    name: "Pan",
    caret: false,
    art: (
      <path
        d="M5 15.500C4 12 1 10 1 8c1-1 2.500 0 3.500 1.500L3 3.500c0-1 1.500-1 2 0L6.500 7 6 1.500c0-1 1.800-1 2 0L8.700 6.500 9.500 1.500c.3-1 1.800-.8 1.800.3L11 7l1.500-4c.5-1 2-.5 1.700.6C13.500 8 14 11 11.500 15.500z"
        fill="#fff"
        stroke="#333"
      />
    ),
  },
  {
    name: "Zoom",
    caret: false,
    art: (
      <>
        <path d="M8 10l4.500 4.500" stroke="#333" strokeWidth="2.6" />
        <circle cx="5.5" cy="7" r="4.3" fill="#dbe8f3" stroke="#3b434e" />
        <path d="M13 1v5M10.500 3.500h5M10.500 8h5" stroke="#333" />
      </>
    ),
  },
  {
    name: "Zoom window",
    caret: true,
    art: (
      <>
        <path d="M.5.5h15v15H.5z" stroke="#555" strokeDasharray="3 2" />
        <path d="M10 10l5 5.500" stroke="#222" strokeWidth="2.6" />
        <circle cx="7" cy="6.5" r="5.7" fill="#e1ecf4" stroke="#3b434e" />
      </>
    ),
  },
  {
    name: "Display",
    caret: true,
    art: (
      <>
        <path d="M.7 1h14.600v10.500H.7z" fill="#fff" stroke="#3b434e" strokeWidth="1.3" />
        <path d="M3 3.300h10v6H3z" fill="#9cc3e6" stroke="#34558b" />
        <path d="M5 12v2.500h6V12" fill="#ddd" stroke="#3b434e" />
      </>
    ),
  },
  {
    name: "Grid",
    caret: true,
    art: (
      <>
        <path d="M.7.7h14.600v14.600H.7z" fill="#fff" stroke="#3b434e" strokeWidth="1.3" />
        <path d="M3.500 1v14M6.500 1v14M9.500 1v14M12.500 1v14M1 3.500h14M1 6.500h14M1 9.500h14M1 12.500h14" stroke="#777" strokeWidth=".8" />
      </>
    ),
  },
  {
    name: "Viewports",
    caret: true,
    art: (
      <>
        <path d="M.7 1.700h14.600v12.600H.7z" fill="#a8cdee" stroke="#34558b" strokeWidth="1.3" />
        <path d="M8 2v12M1 8h14" stroke="#34558b" strokeWidth="1.6" />
        <path d="M3 4h3v2H3zM10 4h3v2h-3zM3 10h3v2H3zM10 10h3v2h-3z" stroke="#6d9cc9" strokeWidth=".9" />
      </>
    ),
  },
];

function NavBar() {
  return (
    <div className="absolute bottom-[6px] left-1/2 flex h-6 -translate-x-1/2 items-center gap-2 bg-[#f1f1f1] px-1">
      {navTools.map((tool) => (
        <button key={tool.name} type="button" aria-label={tool.name} className="flex items-center">
          <svg width="17" height="16" viewBox="0 0 16 16" fill="none">{tool.art}</svg>
          {tool.caret ? <Caret /> : null}
        </button>
      ))}
    </div>
  );
}

/* ---------- timeline ---------- */

const timelineArt: Record<string, ReactNode> = {
  sketch: (
    <>
      <path d="M2 2h26v28H2z" fill="#f6f6f6" stroke="#c6c6c6" strokeWidth="2" />
      <path d="M10 10h11M9 11v12M22 11c0 7-5 11-11 12" stroke="#777" strokeWidth="1.5" />
      <path d="M0 0h4v4H0zM26 0h4v4h-4zM0 28h4v4H0zM8 8h3v3H8zM20 8h3v3h-3zM8 21h3v3H8z" fill="#3a9fe2" />
      <path d="M18 28l9-9 4 4-9 9h-4z" fill="#f5b335" />
      <path d="M26 18l3-3 4 4-3 3z" fill="#f0433a" />
    </>
  ),
  extrude: (
    <>
      <path d="M0 27l5-4h22v4l-5 5H0z" fill="#a8a8a8" />
      <path d="M0 6l6-6h21l-5 6z" fill={LIGHT} />
      <path d="M21 6l6-6v20l-6 7z" fill={DEEP} />
      <path d="M0 6h21v20H0z" fill={MID} />
      <path d="M30.500 4v20" stroke="#333" strokeWidth="1.5" />
      <path d="M28 4h5l-2.500-4z" fill="#333" />
    </>
  ),
  fillet: icons.fillet,
  image: icons.picture,
  joint: (
    <g stroke="#555" strokeWidth="2">
      <rect x="4" y="1" width="10" height="14" rx="3" fill="#eee" />
      <rect x="19" y="14" width="10" height="14" rx="3" fill="#eee" />
      <path d="M8 18v8h8" stroke="#1a8fe0" />
    </g>
  ),
  move: icons.move,
};

const doneFeatures = [
  "sketch", "extrude", "image", "sketch", "extrude", "fillet", "fillet", "extrude", "extrude", "extrude", "fillet", "sketch",
  "extrude", "extrude", "sketch", "extrude", "sketch", "extrude", "sketch", "extrude", "sketch", "extrude", "sketch", "extrude",
];

const rolledBackFeatures = [
  "sketch", "extrude", "extrude", "extrude", "sketch", "extrude", "joint", "move", "sketch", "extrude", "sketch", "extrude",
];

const playback = [
  { name: "Go to start", d: "M2 1.500v13M14 2L4.500 8L14 14z" },
  { name: "Step back", d: "M12 2L2.500 8L12 14zM13.500 5.500v5" },
  { name: "Play", d: "M3.500.5v15L14.500 8z" },
  { name: "Step forward", d: "M4.500 2L14 8L4.500 14zM2.500 5.500v5" },
  { name: "Go to end", d: "M14 1.500v13M2.500 2L12 8L2.500 14z" },
];

function Timeline() {
  const features = [...doneFeatures, ...rolledBackFeatures];
  return (
    <footer className="flex h-12 shrink-0 items-start border-t border-[#d4d4d4] bg-[#f1f1f1] pl-1">
      <div className="mt-4 flex">
        {playback.map((control) => (
          <button key={control.name} type="button" aria-label={control.name} className="grid w-[25px] place-items-center">
            <svg width="14" height="16" viewBox="0 0 16 16" fill="#555" stroke="#555" strokeWidth="1">
              <path d={control.d} />
            </svg>
          </button>
        ))}
      </div>
      <div className="ml-[13px] mt-[15px]">
        <ol className="flex">
          {features.map((feature, i) => (
            <li key={i} className="relative flex w-6 flex-col items-center gap-[3px]">
              <button
                type="button"
                aria-label={feature}
                className={i < doneFeatures.length ? "" : "opacity-20"}
              >
                <Icon size={16}>{timelineArt[feature]}</Icon>
              </button>
              <div className="h-[5px] w-[2px] bg-[#c9c9c9]" />
              {i === doneFeatures.length - 1 ? (
                <svg width="12" height="32" viewBox="0 0 12 32" className="absolute -right-[6px] -top-[6px] z-10" aria-hidden="true">
                  <path d="M0 0h12v5L7 11v21H5V11L0 5z" fill="#555" />
                </svg>
              ) : null}
            </li>
          ))}
        </ol>
        <div className="mx-[11px] h-[2px] bg-[#c9c9c9]" />
      </div>
      <button type="button" aria-label="Timeline settings" className="ml-auto mr-3 mt-[15px]">
        <Gear size={16} />
      </button>
    </footer>
  );
}

export default function App() {
  return (
    <div className="flex h-screen flex-col overflow-hidden bg-white">
      <header className="shrink-0">
        <TitleBar />
        <TabStrip />
        <Ribbon />
      </header>
      <main className="relative flex min-h-0 flex-1">
        <Playfield />
        <ViewCube />
        <aside className="relative z-10 flex w-[304px] flex-col pb-[3px] pl-1 pt-1">
          <Browser />
          <section className="flex h-[26px] shrink-0 items-center border border-[#c6c6c6] bg-[#f1f1f1] pl-6 pr-[10px] font-[Roboto,sans-serif] text-[11px] text-[#666]">
            <h2>COMMENTS</h2>
            <button type="button" aria-label="Show comments" className="ml-auto">
              <svg width="10" height="10" viewBox="0 0 10 10"><circle cx="5" cy="5" r="5" fill="#333" /><path d="M2.500 5h5M5 2.500v5" stroke="#fff" strokeWidth="1.5" /></svg>
            </button>
          </section>
        </aside>
        <NavBar />
        <button type="button" aria-label="Assistant" className="absolute bottom-[9px] right-3">
          <svg width="16" height="16" viewBox="0 0 16 16">
            <path d="M8 0a8 8 0 0 1 8 8v8H8A8 8 0 0 1 8 0z" />
            <path d="M3 11l6-5 3-.5M5 11.500l5-3.500 2.500-.5M11 5v5" stroke="#fff" fill="none" />
          </svg>
        </button>
      </main>
      <Timeline />
    </div>
  );
}
